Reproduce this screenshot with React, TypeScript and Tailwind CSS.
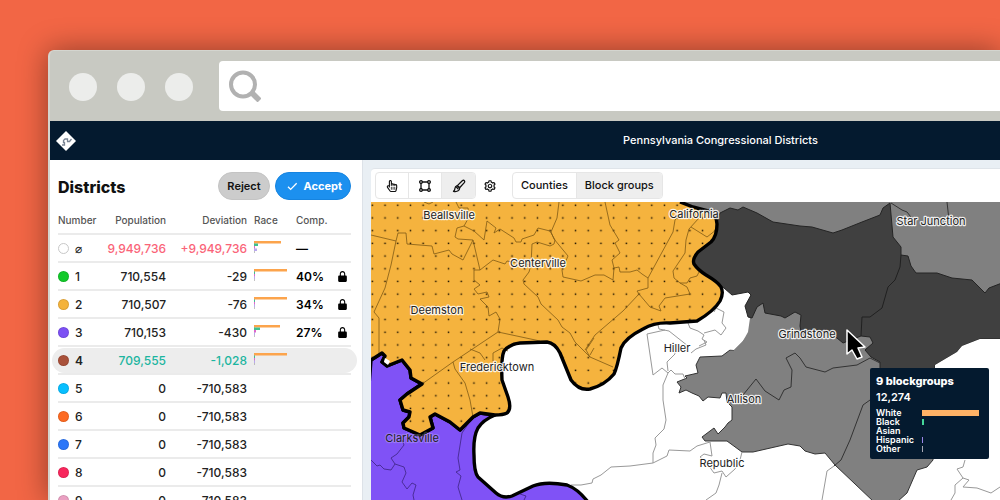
import React from "react";
import { BiShapeSquare, BiCog, BiCheck, BiSolidLockAlt } from "react-icons/bi";
import { FaRegHandPointer } from "react-icons/fa";

type District = {
  id: string;
  color: string;
  population: string;
  deviation: string;
  race?: number[];
  comp?: string;
  locked?: boolean;
  tone?: string;
  selected?: boolean;
};

const districts: District[] = [
  { id: "⌀", color: "#ffffff", population: "9,949,736", deviation: "+9,949,736", race: [27, 4, 1, 3], comp: "—", tone: "text-[#fa6478]" },
  { id: "1", color: "#12c92a", population: "710,554", deviation: "-29", race: [33, 1, 1, 1], comp: "40%", locked: true },
  { id: "2", color: "#f4b33c", population: "710,507", deviation: "-76", race: [33, 1, 1, 1], comp: "34%", locked: true },
  { id: "3", color: "#7c50f4", population: "710,153", deviation: "-430", race: [26, 6, 2, 1], comp: "27%", locked: true },
  { id: "4", color: "#a9513a", population: "709,555", deviation: "-1,028", race: [33, 1, 1, 1], tone: "text-[#1cb5a0]", selected: true },
  { id: "5", color: "#08bfff", population: "0", deviation: "-710,583" },
  { id: "6", color: "#fd6a22", population: "0", deviation: "-710,583" },
  { id: "7", color: "#2b76f8", population: "0", deviation: "-710,583" },
  { id: "8", color: "#f8265c", population: "0", deviation: "-710,583" },
  { id: "9", color: "#eaa0c2", population: "0", deviation: "-710,583" },
];

const raceColors = ["#fca44c", "#3fbf8f", "#dd66cc", "#b9a8ee"];

function RaceChart({ values }: { values: number[] }) {
  return (
    <svg width="36" height="14" className="block" aria-hidden="true">
      <rect x="0" y="2" width="1" height="10" fill="#999999" opacity="0.6" />
      {values.map((v, i) => (
        <rect key={i} x="0" y={i * 2.5} width={v} height="2.5" fill={raceColors[i]} />
      ))}
    </svg>
  );
}

function BrushIcon() {
  return (
    <svg width="14" height="14" viewBox="0 0 14 14" fill="none" stroke="currentColor" strokeWidth="1.3" strokeLinejoin="round" strokeLinecap="round" aria-hidden="true">
      <path d="M5.300 6.600L10.300 1.700Q11.400 0.800 12.300 1.600Q13.100 2.500 12.300 3.600L7.600 8.800Z" />
      <path d="M5.300 6.600L7.600 8.800Q7.800 10.500 6.500 11.600Q4.600 13 1.500 12.400Q2.900 11.400 2.900 9.500Q3.100 7.300 5.300 6.600Z" />
      <path d="M4.600 8.300L6 9.800" />
    </svg>
  );
}

function DistrictTable() {
  return (
    <table className="w-full table-fixed border-collapse text-xs text-[#222]">
      <colgroup>
        <col className="w-10" />
        <col className="w-[68px]" />
        <col className="w-[81px]" />
        <col className="w-[49px]" />
        <col className="w-9" />
        <col />
      </colgroup>
      <thead>
        <tr className="h-7 border-b-2 border-[#ebebeb] text-left text-[10px] text-[#555]">
          <th className="p-0 pt-0.5 font-medium">Number</th>
          <th className="p-0 pt-0.5 text-right font-medium">Population</th>
          <th className="p-0 pt-0.5 text-right font-medium">Deviation</th>
          <th className="p-0 pt-0.5 pl-[7px] font-medium">Race</th>
          <th className="p-0 pt-0.5 font-medium whitespace-nowrap">Comp.</th>
          <th className="p-0" aria-label="Locked" />
        </tr>
      </thead>
      <tbody>
        {districts.map((d) => (
          <tr key={d.id} className="relative isolate h-7 border-b-2 border-[#ebebeb]">
            <td className="p-0 pt-px">
              {d.selected && <span className="absolute -inset-x-1.5 top-0.5 -z-10 h-[25px] rounded-full bg-[#ededed]" />}
              <span className="flex items-center gap-1.5">
                <span
                  className={`size-[11px] shrink-0 rounded-full border ${d.color === "#ffffff" ? "border-[#c8c8c8]" : "border-black/10"}`}
                  style={{ backgroundColor: d.color }}
                />
                <span className={d.selected ? "font-semibold" : "font-medium"}>{d.id}</span>
              </span>
            </td>
            <td className={`p-0 pt-px text-right font-medium ${d.tone ?? ""}`}>{d.population}</td>
            <td className={`p-0 pt-px text-right font-medium ${d.tone ?? ""}`}>{d.deviation}</td>
            <td className="p-0 pl-[7px]">{d.race && <RaceChart values={d.race} />}</td>
            <td className="p-0 pt-px font-semibold text-black">{d.comp}</td>
            <td className="p-0 pr-0.5">
              {d.locked && <BiSolidLockAlt className="ml-auto size-[13px] text-black" aria-label="Locked" />}
            </td>
          </tr>
        ))}
      </tbody>
    </table>
  );
}

const orangeEdge =
  "L693 207L708 211Q717 215 717 224Q717 236 711 242L698 252Q692 259 694 264Q698 270 706 275Q718 282 721 287Q724 293 720 301Q714 311 697 321L670 323Q655 322 643 329Q625 338 621 348Q617 368 614 374Q605 385 590 389Q579 391 571 380L560 353Q555 343 547 342L520 343Q510 344 504 351Q501 358 502 380L508 397Q512 409 507 413Q503 415 495 415L480 413L473 417L460 430L450 422L435 414L430 417L433 428L420 435L404 428L403 423L409 417L410 412L403 410L400 400L407 394L422 384L411 378L410 370L402 360L387 366L382 362L385 356L382 353L371 360";
const orangeShape = `M371 202L680 202${orangeEdge}Z`;
const orangeBorder = `M680 202${orangeEdge}`;
const purpleShape =
  "M371 360L382 353L385 356L382 362L387 366L402 360L410 370L411 378L422 384L407 394L400 400L403 410L410 412L409 417L403 423L404 428L420 435L433 428L430 417L435 414L450 422L460 430L473 417L480 413L495 415Q483 420 478 428Q473 437 474 455Q474 472 478 477L496 493Q503 499 512 496L533 486Q545 481 567 485Q578 489 588 502L360 502Z";

const orangeLines = [
  "M371 235L396 241L398 233L406 233L407 244L432 246L434 254L449 250L452 254L463 260L473 240L480 270L474 270L474 280L480 285L474 289L478 294L487 292L489 297L480 299L488 307L489 316L496 312L500 319L498 332L453 362L422 384",
  "M498 332L540 341",
  "M396 241L391 265L385 288L374 312L379 318L379 356",
  "M424 202L429 204L433 202",
  "M456 202L459 208L468 208L469 217L464 226L457 228L455 237L458 239L473 240",
  "M464 226L474 231L484 240L487 221L496 228L494 233L500 229L514 238L516 242L521 242L522 239L534 235L538 228L550 231L555 240L554 244L550 246L537 242L532 244L531 265L529 272L523 280L524 284L538 297L541 304L558 320L562 327L570 333L575 342L583 350L590 357L613 367",
  "M559 202L557 218L551 232L554 239L568 256L562 270L563 277L581 281L595 275L604 275L613 280L614 268",
  "M480 270L493 260L505 264L507 261L530 265",
  "M585 350L595 335L623 311L639 294L637 291L648 288L648 278L673 232L675 220L682 213",
  "M590 357L586 350L594 338M590 355L594 348",
  "M605 202L610 225L619 240L615 243L620 253L612 260L614 268L619 267L620 272L630 272L637 270L642 274L648 278",
  "M639 294L650 307L661 311L659 306L665 298L690 294L687 287L680 283L674 278L673 271L685 253L686 240L689 229L699 218",
  "M691 227L707 237L716 230M680 283L687 283L690 278L697 276L699 272",
  "M453 362L455 369L465 383L470 400L473 417",
  "M470 349L480 353L485 360M493 361L493 353L502 348L508 351",
];
const purpleLines = [
  "M371 460L377 466L380 465L384 469L391 470L395 464L391 458L397 454L404 445L402 440",
  "M395 464L404 467L406 473L402 482L407 489L412 483L416 485L413 495L414 500",
  "M473 417L462 433L458 458L460 470L456 472L461 476L458 487L462 500",
  "M520 494L526 496L524 500",
];
const whiteLines = [
  "M658 325L659 329L669 331L688 346M665 330L647 334L653 375L662 368L668 373L663 385L663 400L666 420L664 429L655 438L656 445L653 453L653 463",
  "M571 485L581 485L592 483L593 479L601 475L611 467L630 466L653 463L667 456L669 450L690 451L697 446L710 442L712 456L704 454L700 457L706 462L714 473L722 471L726 477L735 469L740 460L742 452",
  "M722 473L719 485L716 493L706 500",
  "M668 373L671 370L675 374L683 374L685 379M668 371L667 362L675 354L675 344M691 353L696 349L706 345L704 340",
  "M688 323L690 328L698 331L704 335L702 339L707 342L699 346M704 333L715 330L721 335L726 328L722 323L724 312L716 308L714 312",
  "M834 466L827 471L822 500M965 460L963 467L957 469L963 478L955 485L955 493L951 500M963 478L969 480L963 487L977 488L991 493L1000 487",
];
const grayLines = [
  "M743 395L756 379L765 391L779 400L784 390L791 387L792 370L786 358L795 353L800 358L806 367L825 372L833 368L857 365L870 358L880 363",
  "M870 400L863 405L850 440L841 460L834 466",
  "M891 203L902 210L907 212L914 221M947 202L949 220",
];

const places = [
  { name: "Beallsville", x: 449, y: 219 },
  { name: "Centerville", x: 538, y: 267 },
  { name: "California", x: 694, y: 218 },
  { name: "Star Junction", x: 931, y: 225 },
  { name: "Deemston", x: 437, y: 314 },
  { name: "Hiller", x: 677, y: 352 },
  { name: "Grindstone", x: 807, y: 338 },
  { name: "Fredericktown", x: 497, y: 371 },
  { name: "Allison", x: 744, y: 403 },
  { name: "Clarksville", x: 412, y: 442 },
  { name: "Republic", x: 722, y: 467 },
];

function DistrictMap() {
  return (
    <svg viewBox="371 202 629 298" preserveAspectRatio="xMinYMin slice" className="absolute inset-0 size-full" role="img" aria-label="District map">
      <defs>
        <pattern id="dots" x="366" y="199" width="12.7" height="12.7" patternUnits="userSpaceOnUse">
          <rect x="5.6" y="5.5" width="1.5" height="1.5" fill="#1a1100" />
        </pattern>
      </defs>
      <rect x="371" y="202" width="629" height="298" fill="#fff" />
      <path d="M680 202L1000 202L1000 300L740 260L717 223Z" fill="#808080" />
      <path
        d="M751 290L762 300L880 330L936 380L933 460L927 467L917 470L907 493L897 502L874 502L835 465L825 453L815 454L805 451L800 446L788 444L753 452L742 452L727 441L705 441L702 437L714 428L718 434L725 427L728 423L732 420L732 407L727 402L726 393L722 393L720 398L708 397L703 401L699 396L692 393L686 390L679 393L681 387L677 382L687 378L685 376L698 373L696 365L700 357L722 356L730 350L734 350L743 341L747 328L749 315Z"
        fill="#808080" stroke="#333" strokeWidth="1"
      />
      <path d="M724 288L732 295L748 292L751 295L745 306L750 318L748 332L743 341L734 350L700 345L690 320Z" fill="#fff" />
      <path
        d="M717 223L720 213L730 208L738 210L743 207L757 213L773 222L800 226L812 227L833 233L842 230L862 222L880 215L883 208L890 203L893 237L901 247L901 255L908 256L911 266L916 273L937 273L952 278L972 280L978 286L985 293L989 288L1002 283L1002 339L980 339L962 346L957 352L935 365L935 375L880 375L880 362L871 357L865 350L873 343L870 337L861 336L843 343L837 338L820 330L801 332L800 326L801 315L795 312L785 318L781 316L765 313L763 303L757 307L752 318L748 317L745 306L751 295L748 292L732 295L724 288L706 275L694 264L695 255L711 242Z"
        fill="#404040" stroke="#242424" strokeWidth="1"
      />
      <path d="M901 255L900 267L895 280L888 287L882 308L870 317L862 317L861 336" fill="none" stroke="#202020" />
      <path d="M1001 339L980 339L962 346L957 352L935 365L935 380L1001 380Z" fill="#fff" />
      {grayLines.map((d) => <path key={d} d={d} fill="none" stroke="#333" strokeWidth="1" />)}
      {whiteLines.map((d) => <path key={d} d={d} fill="none" stroke="#999" strokeWidth="1" />)}
      <path d={purpleShape} fill="#8052f6" stroke="#000" strokeWidth="3.4" strokeLinejoin="round" />
      <path d={orangeShape} fill="#f5b33e" />
      <path d={orangeShape} fill="url(#dots)" />
      {orangeLines.map((d) => <path key={d} d={d} fill="none" stroke="#805a15" strokeOpacity="0.8" strokeWidth="1" />)}
      {purpleLines.map((d) => <path key={d} d={d} fill="none" stroke="#3d2482" strokeOpacity="0.8" strokeWidth="1" />)}
      <path d={orangeBorder} fill="none" stroke="#000" strokeWidth="3.4" strokeLinejoin="round" />
      <path d="M385 358L384 362L388 365L390 361Z" fill="#fff" />
      <g fontFamily="Inter, 'Liberation Sans', sans-serif" fontSize="11" textAnchor="middle" fill="#222" stroke="#fff" strokeWidth="2.4" strokeLinejoin="round" paintOrder="stroke">
        {places.map((p) => (
          <text key={p.name} x={p.x} y={p.y} strokeOpacity={p.name === "Clarksville" ? 0.2 : 0.85}>{p.name}</text>
        ))}
      </g>
      <path d="M847 330L847 354L852 350L857 359L862 357L858 348L865 347Z" fill="#000" stroke="#fff" strokeWidth="1.5" strokeLinejoin="round" />
    </svg>
  );
}

const tooltipRows = [
  { label: "White", value: 57, color: "#ffb266" },
  { label: "Black", value: 2, color: "#45d79a" },
  { label: "Asian", value: 0, color: "#ffffff" },
  { label: "Hispanic", value: 1, color: "#9a86e8" },
  { label: "Other", value: 1, color: "#a9a9b5" },
];

function Tooltip() {
  return (
    <div role="tooltip" className="absolute left-[499px] top-[166px] w-[119px] rounded-xs bg-[#041a2f] px-1.5 pb-1.5 pt-[7px] text-white">
      <p className="text-[11px] font-extrabold leading-3">9 blockgroups</p>
      <p className="mt-1 text-[11px] font-semibold leading-3">12,274</p>
      <ul className="mt-[5px] text-[9px] font-semibold leading-[9px]">
        {tooltipRows.map((r) => (
          <li key={r.label} className="flex items-center">
            <span className="w-[46px]">{r.label}</span>
            <span className="h-1.5" style={{ width: r.value, backgroundColor: r.color }} />
          </li>
        ))}
      </ul>
    </div>
  );
}

function Toolbar() {
  const tool = "flex w-[33px] items-center justify-center";
  return (
    <div className="flex h-[34px] items-center rounded-tl-sm border-t border-[#dfe4e9] bg-white px-1 text-[11px] font-medium text-[#111]">
      <div className="flex h-[27px] divide-x divide-[#e6e6e6] overflow-hidden rounded-sm border border-[#e6e6e6]">
        <button type="button" aria-label="Select" className={tool}><FaRegHandPointer className="size-3" /></button>
        <button type="button" aria-label="Rectangle selection" className={tool}><BiShapeSquare className="size-4" /></button>
        <button type="button" aria-label="Paint brush" className={`${tool} bg-[#eeeeee]`}><BrushIcon /></button>
      </div>
      <button type="button" aria-label="Settings" className="flex w-7 justify-center"><BiCog className="size-3.5" /></button>
      <div className="ml-2 flex h-[27px] divide-x divide-[#e6e6e6] overflow-hidden rounded-sm border border-[#e6e6e6]">
        <button type="button" className="px-2">Counties</button>
        <button type="button" className="bg-[#eeeeee] px-2">Block groups</button>
      </div>
    </div>
  );
}

export default function App() {
  return (
    <div className="flex h-screen flex-col overflow-hidden bg-[#f26645] pl-12 pt-[50px] font-['Inter','Liberation_Sans',sans-serif]">
      <div className="flex min-h-0 flex-1 flex-col rounded-tl-md border-l-2 border-t border-[#d4d5cf] bg-[#c8c9c2] shadow-[0_0_30px_rgba(0,0,0,0.4)]">
        <div className="flex h-[70px] shrink-0 items-center">
          <div className="mt-0.5 flex gap-5 pl-[19px]">
            <span className="size-7 rounded-full bg-[#ecedeb]" />
            <span className="size-7 rounded-full bg-[#ecedeb]" />
            <span className="size-7 rounded-full bg-[#ecedeb]" />
          </div>
          <label className="ml-[26px] flex h-[50px] flex-1 items-center rounded-l bg-white pl-2.5">
            <svg width="32" height="32" viewBox="0 0 32 32" fill="none" stroke="#b1b1b1" aria-hidden="true">
              <circle cx="14" cy="14.500" r="12" strokeWidth="4" />
              <path d="M22 22L30.500 30.500" strokeWidth="5.500" />
            </svg>
            <input type="text" aria-label="Address" className="min-w-0 flex-1 outline-none" />
          </label>
        </div>
        <header className="relative flex h-[39px] shrink-0 items-center justify-center bg-[#041a2f] text-white">
          <a href="#" aria-label="Home" className="absolute left-1.5">
            <svg width="20" height="20" viewBox="0 0 20 20" className="block" aria-hidden="true">
              <path d="M10 0L20 10L10 20L0 10Z" fill="#fff" />
              <path d="M6 14H8.500V11.500H7.500V9.500L9 8H11.500V10.500H13.500L15.500 8" fill="none" stroke="#7a8594" strokeWidth="1.300" />
            </svg>
          </a>
          <h1 className="pl-[391px] text-[11px] font-medium">Pennsylvania Congressional Districts</h1>
        </header>
        <div className="flex min-h-0 flex-1 bg-[#e9eff4]">
          <aside className="w-[313px] shrink-0 overflow-hidden border-r border-[#dde2e8] bg-white px-2 pr-[11px] pt-3">
            <div className="flex h-7 items-center gap-[5px]">
              <h2 className="flex-1 pt-0.5 text-base font-extrabold text-[#111]">Districts</h2>
              <button type="button" className="h-7 rounded-full border border-[#c4c4c4] bg-[#cccccc] px-2 text-[11px] font-semibold text-[#111]">Reject</button>
              <button type="button" className="flex h-7 items-center gap-1 rounded-full border border-[#1684e0] bg-[#1c90ef] px-2 text-[11px] font-bold text-white">
                <BiCheck className="size-4" />
                Accept
              </button>
            </div>
            <div className="mt-1.5">
              <DistrictTable />
            </div>
          </aside>
          <main className="ml-2 mt-2 flex min-w-0 flex-1 flex-col">
            <Toolbar />
            <div className="relative min-h-0 flex-1 overflow-hidden">
              <DistrictMap />
              <Tooltip />
            </div>
          </main>
        </div>
      </div>
    </div>
  );
}
